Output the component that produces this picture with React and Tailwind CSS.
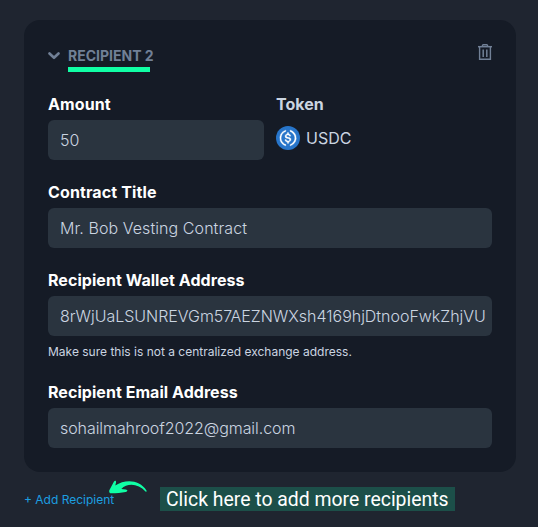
import React from "react";

function Field({ label, value, hint, className = "", labelClass = "", valueClass = "" }) {
  return (
    <div className={className}>
      <label className={"block h-6 text-base leading-6 font-bold text-white " + labelClass}>{label}</label>
      <div className="mt-1 h-10 overflow-hidden rounded-md bg-[#2a343f] pr-[7px] pl-3">
        <div className={"overflow-hidden text-base leading-10 font-light whitespace-nowrap text-[#cbd5e1] " + valueClass}>
          {value}
        </div>
      </div>
      {hint && <p className="mt-2 h-4 text-xs leading-4 whitespace-nowrap text-[#cbd5e1]">{hint}</p>}
    </div>
  );
}

function Chevron() {
  return (
    <svg width="12" height="8" viewBox="0 0 12 8" fill="none" stroke="#718096" strokeWidth="2.6" strokeLinecap="round" strokeLinejoin="round">
      <path d="M1.5 1.5 6 5.8l4.5-4.3" />
    </svg>
  );
}

function Trash() {
  return (
    <svg width="14" height="16" viewBox="0 0 14 16" fill="none" stroke="#718096">
      <path d="M0 2.7h14" strokeWidth="1.5" />
      <path d="M4.5 2.4V1.300L5.200.7h3.600l.7.600v1.100M1.600 3v12.300h10.800V3" strokeWidth="1.400" />
      <path d="M5.200 5.500v7.500M8.800 5.500v7.500" strokeWidth="1.500" />
    </svg>
  );
}

function Usdc() {
  return (
    <svg width="24" height="24" viewBox="0 0 32 32">
      <circle cx="16" cy="16" r="16" fill="#2775ca" />
      <g fill="#fff" stroke="#fff" strokeWidth="0.4">
        <path d="M20.022 18.124c0-2.124-1.28-2.852-3.84-3.156-1.828-.243-2.193-.728-2.193-1.578 0-.85.61-1.396 1.828-1.396 1.097 0 1.707.364 2.011 1.275a.458.458 0 00.427.303h.975a.416.416 0 00.427-.425v-.06a3.04 3.04 0 00-2.743-2.489V9.142c0-.243-.183-.425-.487-.486h-.915c-.243 0-.426.182-.487.486v1.396c-1.829.242-2.986 1.456-2.986 2.974 0 2.002 1.218 2.791 3.778 3.095 1.707.303 2.255.668 2.255 1.639 0 .97-.853 1.638-2.011 1.638-1.585 0-2.133-.667-2.316-1.578-.06-.242-.244-.364-.427-.364h-1.036a.416.416 0 00-.426.425v.06c.243 1.518 1.219 2.61 3.23 2.914v1.457c0 .242.183.425.487.485h.915c.243 0 .426-.182.487-.485V21.34c1.829-.303 3.047-1.578 3.047-3.217z" />
        <path d="M12.892 24.497c-4.754-1.7-7.192-6.98-5.424-11.653.914-2.55 2.925-4.491 5.424-5.402.244-.121.365-.303.365-.607v-.85c0-.242-.121-.424-.365-.485-.061 0-.183 0-.244.06a10.895 10.895 0 00-7.13 13.717c1.096 3.4 3.717 6.01 7.13 7.102.244.121.488 0 .548-.243.061-.06.061-.122.061-.243v-.85c0-.182-.182-.424-.365-.546zm6.46-18.936c-.244-.122-.488 0-.548.242-.061.061-.061.122-.061.243v.85c0 .243.182.485.365.607 4.754 1.7 7.192 6.98 5.424 11.653-.914 2.55-2.925 4.491-5.424 5.402-.244.121-.365.303-.365.607v.85c0 .242.121.424.365.485.061 0 .183 0 .244-.06a10.895 10.895 0 007.13-13.717c-1.096-3.46-3.778-6.07-7.13-7.162z" />
      </g>
    </svg>
  );
}

function Arrow() {
  return (
    <svg className="absolute top-[-7px] left-[85px]" width="40" height="15" viewBox="0 0 40 15" fill="#10ffa5">
      <path d="M5 1.500C6 .2 7.500 1 7 2.500L6.300 5.600C16-.8 30.500-.6 37.600 10.700c.3.900-.4 1.300-1.100.7C29.500 3.700 18.500 2.700 12.300 8.900l4.500.5c2 .3 2.200 2-.1 2.700-4.500 1-9 1.200-14.700 1.200C.3 13.200-.3 11.200.6 9.700Z" />
    </svg>
  );
}

export default function App() {
  return (
    <div className="h-[527px] w-[538px] overflow-hidden bg-[#1f2530] px-6 pt-5 font-['Inter',sans-serif]">
      <section className="h-[452px] w-[492px] rounded-2xl bg-[#151b26] px-6 pt-6">
        <header className="flex justify-between">
          <div className="flex">
            <div className="mt-2 w-5"><Chevron /></div>
            <div>
              <h2 className="h-6 text-sm leading-6 font-bold whitespace-nowrap text-[#718096]">RECIPIENT 2</h2>
              <div className="-mt-px h-[5px] w-[82px] bg-[#10ffa5]" />
            </div>
          </div>
          <button className="block h-4"><Trash /></button>
        </header>
        <div className="mt-5 flex gap-3">
          <Field className="w-[216px]" labelClass="tracking-[0.1px]" label="Amount" value="50" />
          <div>
            <div className="h-6 text-base leading-6 font-bold text-[#cbd5e1]">Token</div>
            <div className="mt-2.5 flex h-6 items-center gap-1.5 text-base text-[#cbd5e1]">
              <Usdc />
              <span>USDC</span>
            </div>
          </div>
        </div>
        <Field className="mt-5" label="Contract Title" labelClass="tracking-[0.12px]" value="Mr. Bob Vesting Contract" valueClass="tracking-[0.07px]" />
        <Field
          className="mt-5"
          label="Recipient Wallet Address"
          labelClass="tracking-[0.05px]"
          value="8rWjUaLSUNREVGm57AEZNWXsh4169hjDtnooFwkZhjVU"
          valueClass="tracking-[-0.02px]"
          hint="Make sure this is not a centralized exchange address."
        />
        <Field className="mt-5" label="Recipient Email Address" labelClass="tracking-[0.05px]" value="sohailmahroof2022@gmail.com" valueClass="tracking-[-0.07px]" />
      </section>
      <footer className="relative mt-[15px] flex">
        <button className="mt-[3px] h-5 w-[136px] text-left text-xs leading-5 whitespace-nowrap text-[#1c9fe0]">+ Add Recipient</button>
        <Arrow />
        <div className="h-6 w-[295px] bg-[#1c4f49] pl-1.5 font-['Roboto',sans-serif] text-[19.4px] leading-[25px] whitespace-nowrap text-white">
          Click here to add more recipients
        </div>
      </footer>
    </div>
  );
}
